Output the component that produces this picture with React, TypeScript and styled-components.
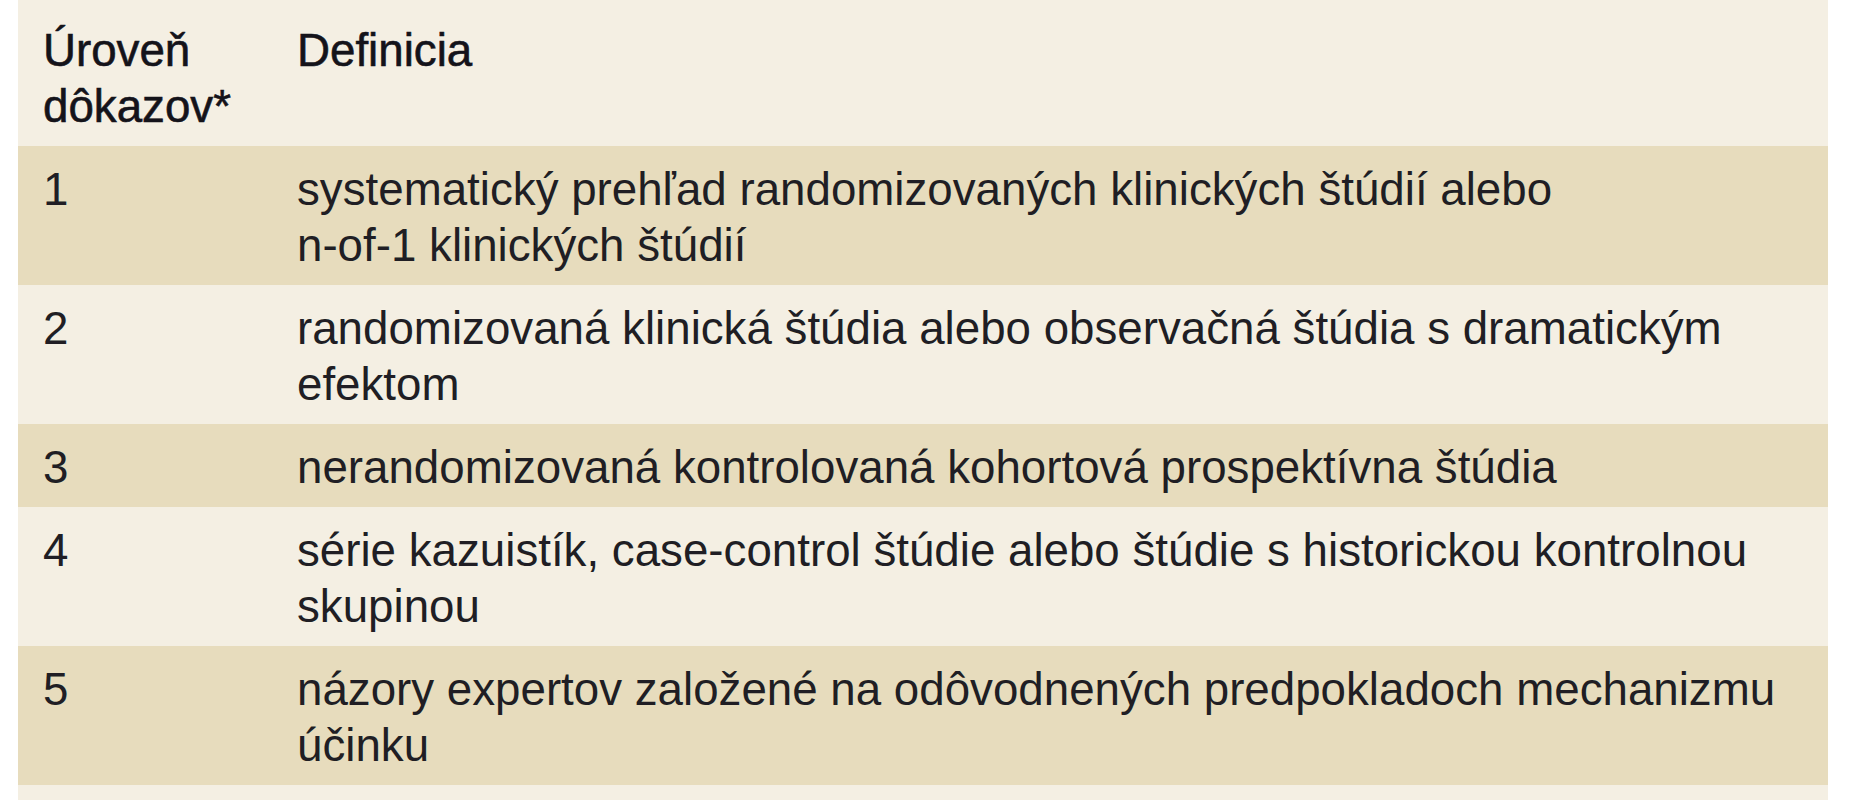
import React from 'react'
import styled, { createGlobalStyle } from 'styled-components'

const GlobalStyle = createGlobalStyle`
	html, body {
		margin: 0;
		padding: 0;
		background: #ffffff;
	}
	body {
		font-family: "Liberation Sans", Arial, sans-serif;
	}
`

const LIGHT = '#f4efe3'
const DARK = '#e7dcbd'

const Page = styled.div`
	padding-left: 18px;
	width: 1810px;
`

const Table = styled.table`
	width: 1810px;
	border-collapse: collapse;
	border-spacing: 0;
	font-family: "Liberation Sans", Arial, sans-serif;
	font-size: 45.7px;
	line-height: 56px;
	color: #201e24;
`

const Row = styled.tr<{ $dark?: boolean }>`
	background: ${(p) => (p.$dark ? DARK : LIGHT)};
`

const HeadCell = styled.th<{ $first?: boolean }>`
	text-align: left;
	vertical-align: top;
	font-weight: 400;
	color: #14131a;
	-webkit-text-stroke: 0.6px #14131a;
	padding: 23px 0 11px ${(p) => (p.$first ? '25px' : '0')};
	width: ${(p) => (p.$first ? '254px' : 'auto')};
`

const Cell = styled.td<{ $first?: boolean }>`
	vertical-align: top;
	padding: 16px 0 11px ${(p) => (p.$first ? '25px' : '0')};
`

const Line = styled.div`
	white-space: nowrap;
`

const Spacer = styled.td`
	height: 18px;
	padding: 0;
`

const rows: Array<{ level: string; lines: string[] }> = [
	{ level: '1', lines: ['systematický prehľad randomizovaných klinických štúdií alebo', 'n-of-1 klinických štúdií'] },
	{ level: '2', lines: ['randomizovaná klinická štúdia alebo observačná štúdia s dramatickým', 'efektom'] },
	{ level: '3', lines: ['nerandomizovaná kontrolovaná kohortová prospektívna štúdia'] },
	{ level: '4', lines: ['série kazuistík, case-control štúdie alebo štúdie s historickou kontrolnou', 'skupinou'] },
	{ level: '5', lines: ['názory expertov založené na odôvodnených predpokladoch mechanizmu', 'účinku'] },
]

export default function App() {
	return (
		<>
			<GlobalStyle />
			<Page>
				<Table>
					<thead>
						<Row>
							<HeadCell $first>
								<Line>Úroveň</Line>
								<Line>dôkazov*</Line>
							</HeadCell>
							<HeadCell>Definicia</HeadCell>
						</Row>
					</thead>
					<tbody>
						{rows.map((row, index) => (
							<Row key={row.level} $dark={index % 2 === 0}>
								<Cell $first>{row.level}</Cell>
								<Cell>
									{row.lines.map((line) => (
										<Line key={line}>{line}</Line>
									))}
								</Cell>
							</Row>
						))}
						<Row>
							<Spacer colSpan={2} />
						</Row>
					</tbody>
				</Table>
			</Page>
		</>
	)
}
